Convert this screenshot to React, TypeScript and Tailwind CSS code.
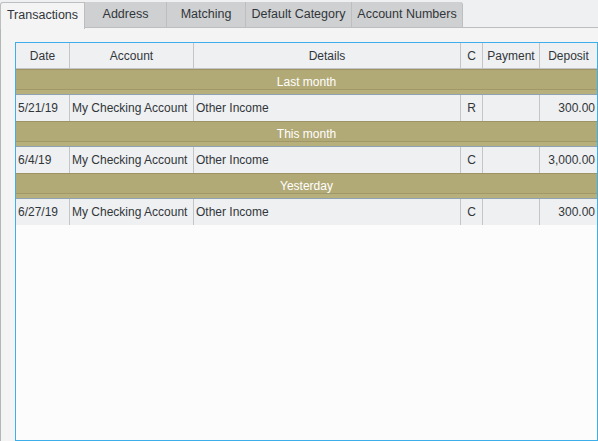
import React from 'react';

const TABS = ['Transactions', 'Address', 'Matching', 'Default Category', 'Account Numbers'];
const TAB_WIDTHS = ['w-[85px]', 'w-[82px]', 'w-[79px]', 'w-[106px]', 'w-[111px]'];

type Row = { date: string; account: string; details: string; c: string; payment: string; deposit: string };

const GROUPS: { label: string; rows: Row[] }[] = [
  { label: 'Last month', rows: [{ date: '5/21/19', account: 'My Checking Account', details: 'Other Income', c: 'R', payment: '', deposit: '300.00' }] },
  { label: 'This month', rows: [{ date: '6/4/19', account: 'My Checking Account', details: 'Other Income', c: 'C', payment: '', deposit: '3,000.00' }] },
  { label: 'Yesterday', rows: [{ date: '6/27/19', account: 'My Checking Account', details: 'Other Income', c: 'C', payment: '', deposit: '300.00' }] },
];

const COLS = [
  { label: 'Date', w: 'w-[54px]' },
  { label: 'Account', w: 'w-[124px]' },
  { label: 'Details', w: 'w-[267px]' },
  { label: 'C', w: 'w-[22px]' },
  { label: 'Payment', w: 'w-[57px]' },
  { label: 'Deposit', w: 'w-[58px]' },
];

const GroupRow: React.FC<{ label: string }> = ({ label }) => (
  <div className="h-[26px] bg-[#b2aa76] border-t border-[#9c9465] border-b border-b-[#8fa2b3] relative flex items-center justify-center text-white text-[12px]">
    <span className="-mt-[1px]">{label}</span>
    <div className="absolute left-0 right-0 bottom-[4px] h-px bg-[#a09866]" />
    <div className="absolute left-0 right-0 bottom-0 h-[4px] bg-[#b8b07c]" />
  </div>
);

const DataRow: React.FC<{ row: Row }> = ({ row }) => (
  <div className="h-[26px] flex bg-[#eff0f1] text-[12px] text-[#31363b]">
    <div className="w-[54px] px-[2px] flex items-center border-r border-[#c3c5c7]">{row.date}</div>
    <div className="w-[124px] px-[2px] flex items-center border-r border-[#c3c5c7] whitespace-nowrap">{row.account}</div>
    <div className="w-[267px] px-[2px] flex items-center border-r border-[#c3c5c7]">{row.details}</div>
    <div className="w-[22px] flex items-center justify-center border-r border-[#c3c5c7]">{row.c}</div>
    <div className="w-[57px] px-[2px] flex items-center justify-end border-r border-[#c3c5c7]">{row.payment}</div>
    <div className="flex-1 px-[2px] flex items-center justify-end">{row.deposit}</div>
  </div>
);

export default function App() {
  return (
    <div className="w-[598px] h-[441px] bg-[#eff0f1] flex flex-col overflow-hidden" style={{ fontFamily: '"Liberation Sans", Arial, sans-serif' }}>
      <div className="h-[28px] flex items-end shrink-0">
        {TABS.map((t, i) => (
          <div
            key={t}
            className={
              i === 0
                ? `${TAB_WIDTHS[i]} h-[27px] pb-[2px] bg-[#f3f4f3] border border-b-0 border-[#bcbebf] rounded-tl-[3px] flex items-center justify-center text-[12.5px] text-[#31363b] relative z-10 -mb-px`
                : `${TAB_WIDTHS[i]} h-[26px] pb-[1px] bg-[#cfd0d1] border-r border-[#bcbebf] border-b ${i === TABS.length - 1 ? 'rounded-tr-[3px]' : ''} flex items-center justify-center text-[12.5px] text-[#31363b]`
            }
          >
            {t}
          </div>
        ))}
        <div className="flex-1 h-full border-b border-[#bcbebf]" />
      </div>
      <div className="flex-1 bg-[#f3f4f3] border-l border-[#b3b5b6] pl-[14px] pt-[14px] flex flex-col">
        <div className="flex-1 border border-[#3daee9] bg-[#fcfcfc] flex flex-col">
          <div className="h-[26px] flex bg-[#eff0f1] text-[12px] text-[#31363b] border-b border-[#c3c5c7]">
            {COLS.map((c, i) => (
              <div
                key={c.label}
                className={`${i === COLS.length - 1 ? 'flex-1' : `${c.w} border-r border-[#c3c5c7]`} flex items-center justify-center whitespace-nowrap overflow-hidden`}
              >
                {c.label}
              </div>
            ))}
          </div>
          {GROUPS.map((g) => (
            <React.Fragment key={g.label}>
              <GroupRow label={g.label} />
              {g.rows.map((r, i) => (
                <DataRow key={i} row={r} />
              ))}
            </React.Fragment>
          ))}
        </div>
      </div>
    </div>
  );
}
